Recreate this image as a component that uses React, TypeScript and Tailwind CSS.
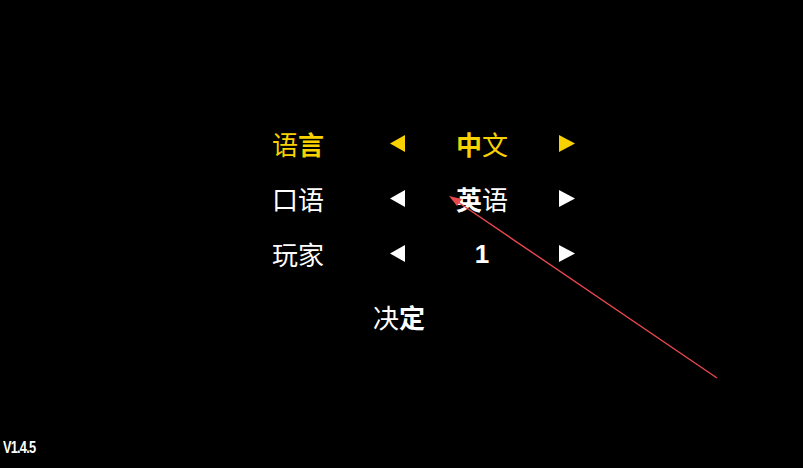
import React from "react";

const YELLOW = "text-[#f7d100]";

function LeftTri({ color }: { color: string }) {
  return (
    <svg width="15" height="17" viewBox="0 0 15 17">
      <polygon points="0,8.5 15,0 15,17" fill={color} />
    </svg>
  );
}
function RightTri({ color }: { color: string }) {
  return (
    <svg width="16" height="17" viewBox="0 0 16 17">
      <polygon points="0,0 16,8.5 0,17" fill={color} />
    </svg>
  );
}

function Row({
  label,
  value,
  active,
}: {
  label: React.ReactNode;
  value: React.ReactNode;
  active?: boolean;
}) {
  const c = active ? "#f7d100" : "#ffffff";
  return (
    <div className={`grid grid-cols-[100px_98px_72px_98px] h-[55px] items-center ${active ? YELLOW : "text-white"}`}>
      <div className="flex justify-center">{label}</div>
      <div className="flex justify-center">
        <LeftTri color={c} />
      </div>
      <div className="flex justify-center">{value}</div>
      <div className="flex justify-center">
        <RightTri color={c} />
      </div>
    </div>
  );
}

export default function App() {
  return (
    <div
      className="relative w-[803px] h-[468px] bg-black flex flex-col overflow-hidden text-[26px] leading-none"
      style={{ fontFamily: '"Noto Sans CJK SC", "Liberation Sans", sans-serif' }}
    >
      <div className="flex justify-center pt-[116px]">
        <div className="ml-[61px] flex flex-col">
          <Row
            active
            label={
              <span>
                <span className="font-normal">语</span>
                <span className="font-bold">言</span>
              </span>
            }
            value={
              <span>
                <span className="font-bold">中</span>
                <span className="font-normal">文</span>
              </span>
            }
          />
          <Row
            label={<span className="font-normal">口语</span>}
            value={
              <span>
                <span className="font-bold">英</span>
                <span className="font-normal">语</span>
              </span>
            }
          />
          <Row
            label={<span className="font-normal">玩家</span>}
            value={
              <span className="font-bold font-['Liberation_Sans',sans-serif]">1</span>
            }
          />
        </div>
      </div>
      <div className="flex justify-center items-center h-[55px] mt-[8px] pr-[5px] text-white">
        <span className="font-normal">决</span>
        <span className="font-bold">定</span>
      </div>
      <div className="mt-auto pl-[3px] pb-[12px] leading-none">
        <div className="origin-left scale-x-[0.8] text-white text-[16px] leading-[16px] font-bold tracking-[-1px] font-['Liberation_Sans',sans-serif]">
          V1.4.5
        </div>
      </div>
      <svg
        className="absolute inset-0 pointer-events-none"
        width="803"
        height="468"
        viewBox="0 0 803 468"
      >
        <line x1="717" y1="378" x2="452" y2="198" stroke="#e8474e" strokeWidth="1.4" />
        <polygon points="449,196 462,199 457,206" fill="#e8474e" />
      </svg>
    </div>
  );
}
